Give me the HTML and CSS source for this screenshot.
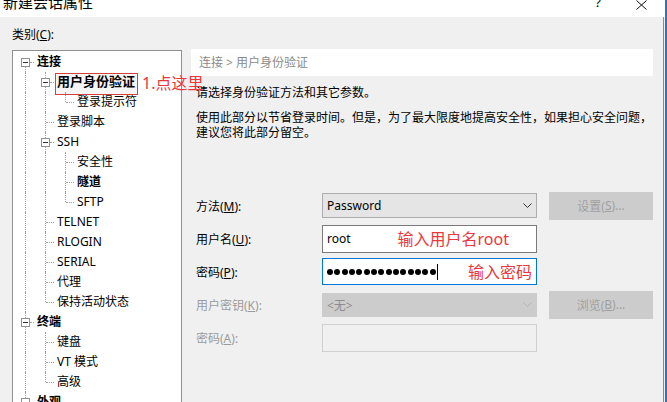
FILE: index.html
```html
<!DOCTYPE html>
<html>
<head>
    <title>新建会话属性</title>
    <meta charset="utf-8">
    <link rel="stylesheet" href="styles.css">
</head>
<body>
<div class="window">
    <div class="dialog">
        <div class="titlebar">
            <span class="title">新建会话属性</span>
            <span class="help">?</span>
            <svg class="close" width="11" height="10" viewBox="0 0 11 10">
                <path d="M0.5 0.5 L10.5 9.5 M10.5 0.5 L0.5 9.5" stroke="#111" stroke-width="1" fill="none"/>
            </svg>
        </div>

        <div class="content">
            <div class="left">
                <div class="cat-label">类别(<u>C</u>):</div>
                <div class="tree">
                    <div class="row"><span class="g exp down"><i></i></span><span class="label b">连接</span></div>
                    <div class="row"><span class="g pipe"></span><span class="g exp up down"><i></i></span><span class="sel">用户身份验证</span><span class="note">1.点这里</span></div>
                    <div class="row"><span class="g pipe"></span><span class="g pipe"></span><span class="g elbow"></span><span class="label">登录提示符</span></div>
                    <div class="row"><span class="g pipe"></span><span class="g tee"></span><span class="label">登录脚本</span></div>
                    <div class="row"><span class="g pipe"></span><span class="g exp up down"><i></i></span><span class="label">SSH</span></div>
                    <div class="row"><span class="g pipe"></span><span class="g pipe"></span><span class="g tee"></span><span class="label">安全性</span></div>
                    <div class="row"><span class="g pipe"></span><span class="g pipe"></span><span class="g tee"></span><span class="label b">隧道</span></div>
                    <div class="row"><span class="g pipe"></span><span class="g pipe"></span><span class="g elbow"></span><span class="label">SFTP</span></div>
                    <div class="row"><span class="g pipe"></span><span class="g tee"></span><span class="label">TELNET</span></div>
                    <div class="row"><span class="g pipe"></span><span class="g tee"></span><span class="label">RLOGIN</span></div>
                    <div class="row"><span class="g pipe"></span><span class="g tee"></span><span class="label">SERIAL</span></div>
                    <div class="row"><span class="g pipe"></span><span class="g tee"></span><span class="label">代理</span></div>
                    <div class="row"><span class="g pipe"></span><span class="g elbow"></span><span class="label">保持活动状态</span></div>
                    <div class="row"><span class="g exp up down"><i></i></span><span class="label b">终端</span></div>
                    <div class="row"><span class="g pipe"></span><span class="g tee"></span><span class="label">键盘</span></div>
                    <div class="row"><span class="g pipe"></span><span class="g tee"></span><span class="label">VT 模式</span></div>
                    <div class="row"><span class="g pipe"></span><span class="g elbow"></span><span class="label">高级</span></div>
                    <div class="row"><span class="g exp up down"><i></i></span><span class="label b">外观</span></div>
                </div>
            </div>

            <div class="right">
                <div class="crumb">连接 &gt; 用户身份验证</div>
                <p class="intro">请选择身份验证方法和其它参数。</p>
                <p class="desc">使用此部分以节省登录时间。但是，为了最大限度地提高安全性，如果担心安全问题，<br>建议您将此部分留空。</p>

                <div class="form">
                    <span class="lbl">方法(<u>M</u>):</span>
                    <div class="field combo">
                        <span>Password</span>
                        <svg width="9" height="5" viewBox="0 0 9 5"><polyline points="0.5,0.5 4.5,4.5 8.5,0.5" fill="none" stroke="#333" stroke-width="1"/></svg>
                    </div>
                    <div class="btn">设置(<u>S</u>)...</div>

                    <span class="lbl">用户名(<u>U</u>):</span>
                    <div class="field">
                        <span>root</span>
                        <span class="hint user-hint">输入用户名root</span>
                    </div>
                    <span></span>

                    <span class="lbl">密码(<u>P</u>):</span>
                    <div class="field focus">
                        <span class="dots">
                            <i class="dot"></i><i class="dot"></i><i class="dot"></i><i class="dot"></i><i class="dot"></i>
                            <i class="dot"></i><i class="dot"></i><i class="dot"></i><i class="dot"></i><i class="dot"></i>
                            <i class="dot"></i><i class="dot"></i><i class="dot"></i><i class="dot"></i><i class="dot"></i>
                        </span>
                        <span class="caret"></span>
                        <span class="hint pass-hint">输入密码</span>
                    </div>
                    <span></span>

                    <span class="lbl off">用户密钥(<u>K</u>):</span>
                    <div class="field combo off">
                        <span>&lt;无&gt;</span>
                        <svg width="9" height="5" viewBox="0 0 9 5"><polyline points="0.5,0.5 4.5,4.5 8.5,0.5" fill="none" stroke="#b4b4b4" stroke-width="1"/></svg>
                    </div>
                    <div class="btn">浏览(<u>B</u>)...</div>

                    <span class="lbl off">密码(<u>A</u>):</span>
                    <div class="field off"></div>
                    <span></span>
                </div>
            </div>
        </div>
    </div>
    <div class="edge"></div>
</div>
</body>
</html>
```

FILE: styles.css
```css
* {
    box-sizing: border-box;
}
html, body {
    margin: 0;
    padding: 0;
}
body {
    width: 667px;
    height: 402px;
    overflow: hidden;
    background: #f0f0f0;
    font-family: "Noto Sans", "Noto Sans CJK SC", sans-serif;
    font-size: 12px;
    color: #000;
}
.window {
    display: flex;
    height: 402px;
}
.dialog {
    flex: 1;
    display: flex;
    flex-direction: column;
    min-width: 0;
}
.edge {
    width: 2px;
    background: #2b72c2;
}

/* 标题栏 */
.titlebar {
    height: 17px;
    flex: none;
    background: #fff;
    display: flex;
    align-items: flex-start;
    overflow: hidden;
}
.title {
    font-size: 15px;
    line-height: 15px;
    margin: -5px 0 0 3px;
}
.help {
    margin: -4px 35px 0 auto;
    font-size: 13px;
    line-height: 13px;
}
.close {
    margin: 0 18px 0 0;
}

.content {
    flex: 1;
    display: flex;
    padding-left: 12px;
    margin-right: 1px;
    border-right: 1px solid #8c8c8c;
    min-height: 0;
}

/* 左侧树 */
.left {
    width: 170px;
    flex: none;
}
.cat-label {
    margin-top: 11px;
    height: 14px;
    line-height: 14px;
}
.tree {
    margin-top: 8px;
    height: 360px;
    background: #fff;
    border: 1px solid #8f8f8f;
    padding: 1px 0 0 2px;
}
.row {
    display: flex;
    align-items: center;
    height: 20px;
    white-space: nowrap;
}
.g {
    position: relative;
    flex: none;
    width: 20px;
    height: 20px;
}
.pipe::before, .tee::before, .elbow::before, .exp::before {
    content: "";
    position: absolute;
    left: 10px;
    top: 0;
    bottom: 0;
    border-left: 1px dotted #a0a0a0;
}
.elbow::before {
    bottom: 10px;
}
.exp::before {
    display: none;
}
.exp.up::before {
    display: block;
    bottom: 10px;
}
.exp.down::before {
    display: block;
    top: 10px;
}
.exp.up.down::before {
    top: 0;
    bottom: 0;
}
.tee::after, .elbow::after, .exp::after {
    content: "";
    position: absolute;
    left: 11px;
    top: 10px;
    width: 8px;
    border-top: 1px dotted #a0a0a0;
}
.exp::after {
    left: 15px;
    width: 4px;
}
.exp i {
    position: absolute;
    left: 6px;
    top: 6px;
    width: 9px;
    height: 9px;
    border: 1px solid #919191;
    background: #fff;
    z-index: 1;
}
.exp i::before {
    content: "";
    position: absolute;
    left: 1px;
    top: 3px;
    width: 5px;
    height: 1px;
    background: #333;
}
.label {
    margin-left: 2px;
    line-height: 20px;
}
.b {
    font-weight: bold;
}
.sel {
    align-self: flex-start;
    margin-top: 1px;
    border: 1px solid #d6403a;
    padding: 0 2px 6px 1px;
    font-size: 13px;
    line-height: 14px;
    font-weight: bold;
    background: #f5f5f5;
}
.note {
    position: relative;
    z-index: 2;
    align-self: flex-start;
    margin: 3px 0 0 4px;
    color: #e8383d;
    font-size: 16px;
    line-height: 16px;
}

/* 右侧面板 */
.right {
    width: 462px;
    flex: none;
    margin-left: 9px;
}
.crumb {
    margin-top: 32px;
    height: 27px;
    line-height: 27px;
    padding-left: 8px;
    background: #fff;
    color: #8a8a8a;
}
.intro {
    margin: 9px 0 0 5px;
    line-height: 16px;
}
.desc {
    margin: 9px 0 0 5px;
    line-height: 15px;
    white-space: nowrap;
}
.form {
    margin: 49px 0 0 5px;
    display: grid;
    grid-template-columns: 114px 215px 104px;
    grid-auto-rows: 33px;
    column-gap: 12px;
    align-items: center;
}
.lbl.off {
    color: #9b9b9b;
}
.field {
    height: 28px;
    display: flex;
    align-items: center;
    padding-left: 4px;
    background: #fff;
    border: 1px solid #7a7a7a;
    white-space: nowrap;
}
.combo {
    height: 25px;
    background: #e5e5e5;
    border-color: #adadad;
}
.combo svg {
    margin: 0 4px 0 auto;
}
.focus {
    height: 27px;
    border-color: #0078d7;
}
.field.off {
    background: #f0f0f0;
    border-color: #d0d0d0;
}
.combo.off {
    height: 24px;
    background: #cccccc;
    border-color: #cccccc;
    color: #8d8d8d;
}
.btn {
    height: 28px;
    display: flex;
    align-items: center;
    justify-content: center;
    background: #cccccc;
    border: 1px solid #cccccc;
    color: #a0a0a0;
}
.dots {
    display: flex;
    gap: 1.33px;
}
.dot {
    width: 6px;
    height: 6px;
    border-radius: 50%;
    background: #000;
}
.caret {
    width: 1px;
    height: 16px;
    margin-left: 1px;
    background: #000;
}
.hint {
    margin-left: auto;
    color: #e8383d;
    font-size: 16px;
    line-height: 16px;
}
.user-hint {
    margin-right: 27px;
}
.pass-hint {
    margin-right: 4px;
}
```
